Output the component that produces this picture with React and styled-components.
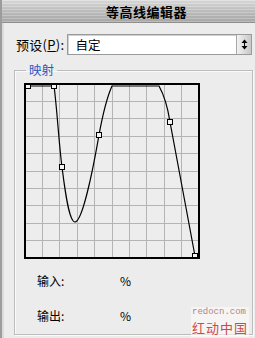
import React from 'react';
import styled, { createGlobalStyle } from 'styled-components';

const GlobalStyle = createGlobalStyle`
  html, body {
    margin: 0;
    padding: 0;
    background: #ececec;
  }
  body {
    font-family: 'Noto Sans CJK SC', 'DejaVu Sans', sans-serif;
    font-size: 12px;
    color: #000;
  }
`;

const Window = styled.div`
  position: relative;
  width: 255px;
  height: 338px;
  box-sizing: border-box;
  background: #ececec;
  border-left: 2px solid #9c9c9c;
  box-shadow: inset 2px 0 0 #dcdcdc;
  overflow: hidden;
`;

const TitleBar = styled.div`
  height: 22px;
  display: flex;
  align-items: center;
  justify-content: center;
  padding-left: 36px;
  font-weight: bold;
  font-size: 13px;
  letter-spacing: 0.5px;
  background:
    repeating-linear-gradient(180deg, rgba(255,255,255,0.18) 0 1px, rgba(0,0,0,0.03) 1px 3px),
    linear-gradient(180deg, #dedede 0%, #c4c4c4 45%, #ababab 100%);
  border-bottom: 1px solid #8e8e8e;
  border-top-left-radius: 5px;
`;

const Content = styled.div`
  padding: 10px 3px 0 10px;
`;

const PresetRow = styled.div`
  display: flex;
  align-items: center;
  gap: 3px;
  padding-left: 4px;
  height: 22px;
`;

const Label = styled.span`
  white-space: nowrap;
  font-size: 13px;
  letter-spacing: 0.3px;
`;

const Select = styled.div`
  flex: 1;
  height: 21px;
  box-sizing: border-box;
  display: flex;
  align-items: center;
  background: #fff;
  border: 1px solid #9a9a9a;
  box-shadow: inset 1px 1px 0 #d0d0d0;
  padding-left: 7px;
  font-size: 12.5px;
`;

const SelectText = styled.span`
  flex: 1;
`;

const ArrowButton = styled.div`
  width: 14px;
  height: 19px;
  display: flex;
  align-items: center;
  justify-content: center;
  background: linear-gradient(90deg, #f2f2f2, #c8c8c8);
  border-left: 1px solid #a8a8a8;
`;

const GroupBox = styled.fieldset`
  margin: 8px 0 0 2px;
  padding: 0;
  width: 239px;
  height: 272px;
  box-sizing: border-box;
  border: 1px solid #bcbcbc;
  box-shadow: inset 1px 1px 0 #fafafa, 1px 1px 0 #fafafa;
  position: relative;
`;

const Legend = styled.legend`
  margin-left: 11px;
  padding: 0 3px;
  color: #2858c8;
  font-size: 12.5px;
  line-height: 14px;
`;

const GraphBox = styled.div`
  margin: 6px 0 0 9px;
  width: 176px;
  height: 176px;
`;

const Readouts = styled.div`
  display: grid;
  grid-template-columns: 83px max-content;
  justify-items: start;
  row-gap: 23px;
  padding: 16px 0 0 22px;
`;

const ReadoutText = styled.span`
  line-height: 12px;
`;

const Watermark = styled.div`
  position: absolute;
  right: 6px;
  bottom: 1px;
  display: flex;
  flex-direction: column;
  align-items: flex-start;
  background: rgba(255, 250, 250, 0.6);
  padding: 0 1px;
`;

const WaterSite = styled.div`
  font-family: 'Liberation Mono', monospace;
  font-size: 9px;
  line-height: 11px;
  color: #a88888;
`;

const WaterName = styled.div`
  font-family: 'Noto Sans CJK SC', sans-serif;
  font-size: 13px;
  line-height: normal;
  letter-spacing: 1px;
  color: #d04848;
`;

const UpDownIcon = () => (
  <svg width="7" height="11" viewBox="0 0 7 11">
    <path d="M3.5 0.5 L6.5 4 L0.5 4 Z" fill="#000" />
    <path d="M0.5 7 L6.5 7 L3.5 10.5 Z" fill="#000" />
    <line x1="3.5" y1="4" x2="3.5" y2="7" stroke="#000" />
  </svg>
);

const points = [
  [4, 3], [30, 3], [38, 84], [75, 52], [146, 39], [171, 173],
];

const Graph = () => {
  const lines = [];
  for (let i = 1; i < 10; i++) {
    const p = 1 + i * 17.4;
    lines.push(<line key={'v' + i} x1={p} y1="1" x2={p} y2="175" stroke="#b4b4b4" strokeWidth="1" />);
    lines.push(<line key={'h' + i} x1="1" y1={p} x2="175" y2={p} stroke="#b4b4b4" strokeWidth="1" />);
  }
  return (
    <svg width="176" height="176" viewBox="0 0 176 176">
      <rect x="0" y="0" width="176" height="176" fill="#ededed" />
      <g shapeRendering="crispEdges">{lines}</g>
      <path
        d="M4,3 L30,3 C33,25 35,62 38,84 C41,108 45,139 51,139 C58,139 68,92 75,52 C79,30 84,12 88,3 L135,3 C140,12 144,26 146,39 L171,173"
        fill="none"
        stroke="#000"
        strokeWidth="1.2"
      />
      {points.map(([x, y], i) => (
        <rect key={i} x={x - 2.5} y={y - 2.5} width="5" height="5" fill="#f4f4f4" stroke="#000" strokeWidth="1" />
      ))}
      <rect x="1" y="1" width="174" height="174" fill="none" stroke="#000" strokeWidth="2" />
    </svg>
  );
};

const App = () => (
  <>
    <GlobalStyle />
    <Window>
      <TitleBar>等高线编辑器</TitleBar>
      <Content>
        <PresetRow>
          <Label>预设(<u>P</u>):</Label>
          <Select>
            <SelectText>自定</SelectText>
            <ArrowButton><UpDownIcon /></ArrowButton>
          </Select>
        </PresetRow>
        <GroupBox>
          <Legend>映射</Legend>
          <GraphBox><Graph /></GraphBox>
          <Readouts>
            <ReadoutText>输入:</ReadoutText>
            <ReadoutText>%</ReadoutText>
            <ReadoutText>输出:</ReadoutText>
            <ReadoutText>%</ReadoutText>
          </Readouts>
        </GroupBox>
      </Content>
      <Watermark>
        <WaterSite>redocn.com</WaterSite>
        <WaterName>红动中国</WaterName>
      </Watermark>
    </Window>
  </>
);

export default App;
